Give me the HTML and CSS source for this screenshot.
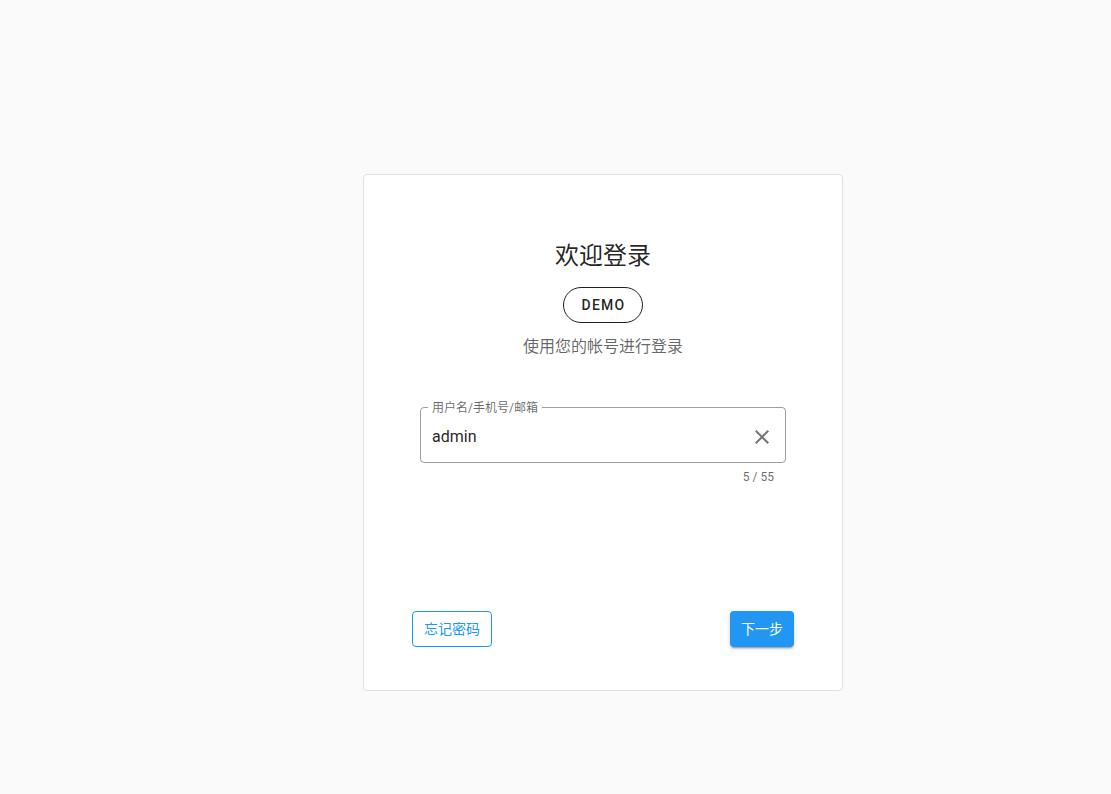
FILE: index.html
```html
<!DOCTYPE html>
<html lang="zh-CN">
<head>
<meta charset="utf-8">
<title>欢迎登录</title>
<link rel="stylesheet" href="styles.css">
</head>
<body>
<div class="page">
  <div class="card">
    <h1 class="title">欢迎登录</h1>
    <div class="chip-row"><span class="chip">DEMO</span></div>
    <p class="subtitle">使用您的帐号进行登录</p>
    <div class="form">
      <div class="field">
        <span class="field-label">用户名/手机号/邮箱</span>
        <span class="field-value">admin</span>
        <svg class="clear-icon" viewBox="0 0 24 24" width="24" height="24"><path d="M19 6.41 17.59 5 12 10.59 6.41 5 5 6.41 10.59 12 5 17.59 6.41 19 12 13.41 17.59 19 19 17.59 13.41 12z" fill="currentColor"/></svg>
      </div>
      <div class="counter">5 / 55</div>
    </div>
    <div class="actions">
      <button class="btn btn-outline">忘记密码</button>
      <button class="btn btn-primary">下一步</button>
    </div>
  </div>
</div>
</body>
</html>
```

FILE: styles.css
```css
html, body {
  margin: 0;
  padding: 0;
  background: #fafafa;
  font-family: Roboto, "Noto Sans CJK SC", sans-serif;
}
.page {
  padding-top: 174px;
  padding-left: 363px;
  height: 620px;
}
.card {
  box-sizing: border-box;
  width: 480px;
  height: 517px;
  background: #fff;
  border: 1px solid #e0e0e0;
  border-radius: 4px;
  padding: 65px 48px 43px;
  display: flex;
  flex-direction: column;
}
.title {
  margin: 0;
  font-size: 24px;
  line-height: 32px;
  font-weight: 400;
  text-align: center;
  color: rgba(0,0,0,.87);
}
.chip-row {
  margin-top: 15px;
  display: flex;
  justify-content: center;
}
.chip {
  box-sizing: border-box;
  height: 36px;
  width: 80px;
  border: 1px solid rgba(0,0,0,.87);
  border-radius: 18px;
  display: flex;
  align-items: center;
  justify-content: center;
  font-size: 14px;
  font-weight: 500;
  letter-spacing: 1.25px;
  color: rgba(0,0,0,.87);
  padding-left: 1px;
}
.subtitle {
  margin: 12px 0 0;
  font-size: 16px;
  line-height: 24px;
  text-align: center;
  color: rgba(0,0,0,.6);
}
.form {
  margin: 48px 8px 0;
}
.field {
  position: relative;
  box-sizing: border-box;
  height: 56px;
  border: 1px solid rgba(0,0,0,.38);
  border-radius: 4px;
  display: flex;
  align-items: center;
  padding: 3px 11px 0 11px;
}
.field-label {
  position: absolute;
  top: -8px;
  left: 7px;
  padding: 0 4px;
  background: #fff;
  font-size: 12px;
  line-height: 16px;
  color: rgba(0,0,0,.6);
}
.field-value {
  flex: 1;
  font-size: 16px;
  line-height: 24px;
  color: rgba(0,0,0,.87);
}
.clear-icon {
  color: rgba(0,0,0,.54);
  display: block;
}
.counter {
  margin-top: 7px;
  padding-right: 12px;
  text-align: right;
  font-size: 12px;
  line-height: 14px;
  color: rgba(0,0,0,.6);
}
.actions {
  margin-top: auto;
  display: flex;
  justify-content: space-between;
}
.btn {
  font-family: Roboto, "Noto Sans CJK SC", sans-serif;
  height: 36px;
  padding: 0 11px 2px;
  font-size: 14px;
  border-radius: 4px;
  cursor: pointer;
}
.btn-outline {
  background: #fff;
  color: #2196f3;
  border: 1px solid #2196f3;
}
.btn-primary {
  background: #2196f3;
  color: #fff;
  border: none;
  box-shadow: 0 3px 1px -2px rgba(0,0,0,.2), 0 2px 2px 0 rgba(0,0,0,.14), 0 1px 5px 0 rgba(0,0,0,.12);
}
```
